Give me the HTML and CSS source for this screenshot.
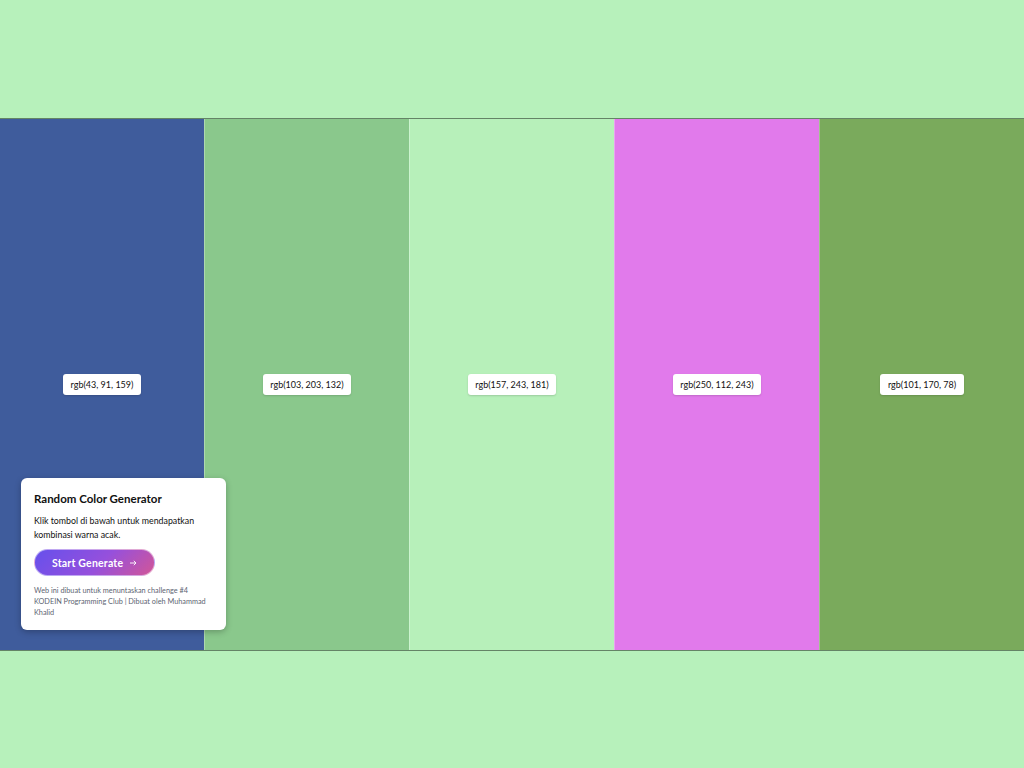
FILE: index.html
```html
<!DOCTYPE html>
<html lang="id">
<head>
<meta charset="utf-8">
<title>Random Color Generator</title>
<link rel="stylesheet" href="styles.css">
</head>
<body>
<main class="palette">
  <section class="swatch" style="background:#3f5c9c"><span class="label">rgb(43, 91, 159)</span></section>
  <section class="swatch" style="background:#8ac88c"><span class="label">rgb(103, 203, 132)</span></section>
  <section class="swatch" style="background:#b7f0ba"><span class="label">rgb(157, 243, 181)</span></section>
  <section class="swatch" style="background:#e17aeb"><span class="label">rgb(250, 112, 243)</span></section>
  <section class="swatch" style="background:#7aaa5c"><span class="label">rgb(101, 170, 78)</span></section>
</main>
<aside class="card">
  <h1 class="card-title">Random Color Generator</h1>
  <p class="card-text">Klik tombol di bawah untuk mendapatkan kombinasi warna acak.</p>
  <button class="btn">Start Generate
    <svg class="arrow" width="7" height="6" viewBox="0 0 7 6" aria-hidden="true"><path d="M0 3H6M3.8 0.8L6 3L3.8 5.2" fill="none" stroke="#fff" stroke-width="0.9"/></svg>
  </button>
  <p class="card-foot">Web ini dibuat untuk menuntaskan challenge #4 KODEIN Programming Club | Dibuat oleh Muhammad Khalid</p>
</aside>
</body>
</html>
```

FILE: styles.css
```css
* { box-sizing: border-box; }
html, body { margin: 0; padding: 0; }
body {
  background: #b7f1bb;
  height: 768px;
  overflow: hidden;
  font-family: Lato, "Noto Sans", sans-serif;
  position: relative;
}
.palette {
  margin-top: 118px;
  height: 533px;
  display: flex;
  border-top: 1px solid rgba(0,0,0,0.45);
  border-bottom: 1px solid rgba(0,0,0,0.45);
}
.swatch {
  flex: 1 1 0;
  display: flex;
  align-items: center;
  justify-content: center;
  border-left: 1px solid rgba(255,255,255,0.3);
}
.swatch:first-child { border-left: none; }
.label {
  background: #fff;
  color: #111;
  font-size: 9px;
  padding: 0 7.5px;
  height: 21px;
  line-height: 21px;
  border-radius: 3px;
  box-shadow: 0 1px 2px rgba(0,0,0,0.15);
}
.card {
  position: absolute;
  left: 21px;
  top: 478px;
  width: 205px;
  height: 152px;
  background: #fff;
  border-radius: 6px;
  padding: 13px 13px 0;
  box-shadow: 0 2px 6px rgba(0,0,0,0.25);
}
.card-title {
  margin: 0 0 7px;
  font-size: 11.5px;
  font-weight: 700;
  color: #111;
  line-height: 16px;
}
.card-text {
  margin: 0 0 7px;
  font-size: 8.8px;
  line-height: 14px;
  color: #111;
}
.btn {
  display: inline-flex;
  align-items: center;
  gap: 7px;
  height: 27px;
  width: 121px;
  padding: 0 0 0 17px;
  border: 1px solid rgba(255,255,255,0.5);
  border-radius: 14px;
  background: linear-gradient(135deg, #6650ec 0%, #9650dc 55%, #d25697 100%);
  color: #fff;
  font-family: inherit;
  font-size: 10.5px;
  font-weight: 700;
  letter-spacing: 0.2px;
  cursor: pointer;
}
.arrow { display: block; }
.card-foot {
  margin: 9px 0 0;
  font-size: 7.3px;
  line-height: 11px;
  color: #5d6472;
}
```
